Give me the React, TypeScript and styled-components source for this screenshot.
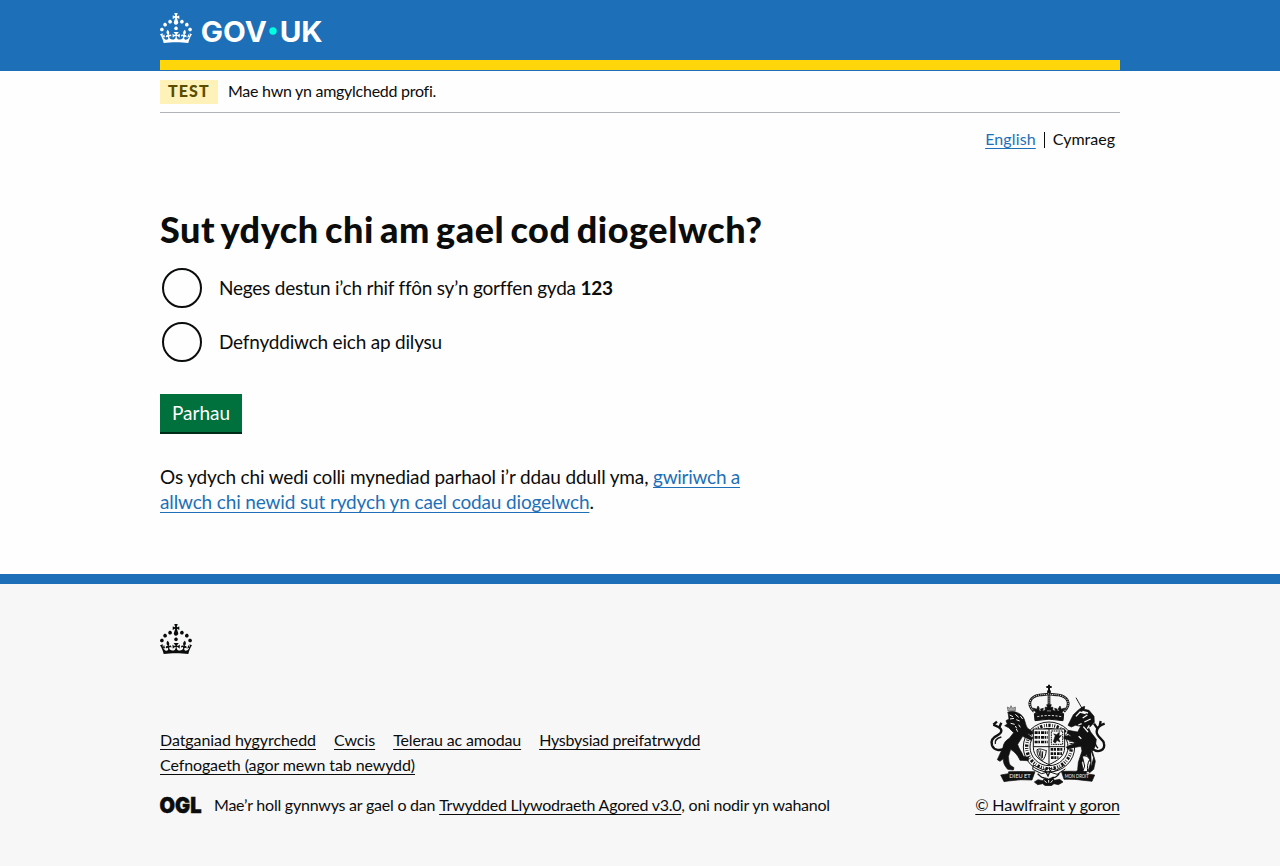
import React from "react";
import styled, { createGlobalStyle } from "styled-components";

const GlobalStyle = createGlobalStyle`
  * { box-sizing: border-box; }
  body {
    margin: 0;
    background: #fefefe;
    color: #0b0c0c;
    font-family: Lato, "Liberation Sans", sans-serif;
    font-size: 19px;
    line-height: 25px;
  }
`;

type Track = { $track?: number };

const Container = styled.div`
  width: 960px;
  margin: 0 auto;
`;

const Header = styled.header`
  height: 71px;
  background: #1d70b8;
`;

const HeaderInner = styled(Container)`
  height: 70px;
  padding-top: 13px;
  border-bottom: 10px solid #ffd60a;
`;

const HomeLink = styled.a`
  display: block;
  width: 162px;
  height: 30px;
  color: #fff;
`;

const LogoSvg = styled.svg`
  display: block;
  overflow: visible;
`;

const Label = styled.span<Track>`
  letter-spacing: ${(p) => p.$track ?? 0}px;
  white-space: nowrap;
`;

const PhaseBanner = styled.div`
  display: flex;
  align-items: center;
  height: 42px;
  border-bottom: 1px solid #b1b4b6;
  font-size: 16px;
  line-height: 20px;

  ${Label} {
    padding-bottom: 2px;
  }
`;

const Tag = styled.strong`
  width: 58px;
  height: 24px;
  margin-right: 10px;
  padding-left: 8px;
  background: #fff2b8;
  color: #594d00;
  font-size: 16px;
  font-weight: 900;
  line-height: 22px;
  letter-spacing: 1.1px;
`;

const Link = styled.a<Track & { $dark?: boolean }>`
  color: ${(p) => (p.$dark ? "#0b0c0c" : "#1d70b8")};
  letter-spacing: ${(p) => p.$track ?? 0}px;
  text-decoration: underline;
  text-decoration-thickness: 1px;
  text-underline-offset: 3px;
  text-decoration-skip-ink: none;
  white-space: nowrap;
`;

const LanguageNav = styled.nav`
  display: flex;
  justify-content: flex-end;
  align-items: center;
  height: 25px;
  margin-top: 13px;
  padding-right: 5px;
  font-size: 16px;
`;

const Divider = styled.span`
  width: 1px;
  height: 16px;
  margin: 2px 8px 0;
  background: #0b0c0c;
`;

const Main = styled.main`
  width: 630px;
  padding-top: 58px;
`;

const Heading = styled.h1`
  margin: 0 0 17px;
  font-size: 36px;
  line-height: 40px;
  font-weight: 900;
  letter-spacing: 0.57px;
  word-spacing: -3px;
  white-space: nowrap;
`;

const Radio = styled.label`
  display: flex;
  align-items: center;
  height: 44px;
  margin-bottom: 10px;
  padding-left: 2px;

  ${Label} {
    padding-bottom: 2px;
  }
`;

const RadioCircle = styled.span`
  width: 40px;
  height: 40px;
  margin-right: 17px;
  border: 2px solid #0b0c0c;
  border-radius: 50%;
`;

const Button = styled.button`
  display: block;
  width: 82px;
  height: 38px;
  margin: 30px 0 32px;
  padding: 0 0 2px;
  border: 0;
  background: #00703c;
  box-shadow: 0 2px 0 #002d18;
  color: #fff;
  font: inherit;
`;

const Paragraph = styled.p`
  margin: 0;
`;

const Footer = styled.footer`
  height: 292px;
  margin-top: 60px;
  padding-top: 40px;
  border-top: 10px solid #1d70b8;
  background: #f7f7f7;
  font-size: 16px;
`;

const FooterCrown = styled.div`
  height: 60px;
`;

const FooterRow = styled.div`
  display: flex;
  justify-content: space-between;
`;

const FooterLinks = styled.div`
  display: flex;
  flex-wrap: wrap;
  column-gap: 18px;
  width: 700px;
  padding-top: 43px;
`;

const Licence = styled.div`
  display: flex;
  align-items: center;
  margin-top: 15px;
`;

const OglMark = styled.svg`
  display: block;
  overflow: visible;
  margin-right: 13px;
`;

const Copyright = styled.div`
  display: flex;
  flex-direction: column;
  align-items: center;
  width: 145px;
`;

const CrestSvg = styled.svg`
  display: block;
  margin-bottom: 6px;
`;

const CROWN =
  "M22.6 10.4c-1 .4-2-.1-2.4-1-.4-.9.1-2 1-2.4.9-.4 2 .1 2.4 1s-.1 2-1 2.4m-5.9 6.7c-.9.4-2-.1-2.4-1-.4-.9.1-2 1-2.4.9-.4 2 .1 2.4 1s-.1 2-1 2.4m10.8-3.7c-1 .4-2-.1-2.4-1-.4-.9.1-2 1-2.4.9-.4 2 .1 2.4 1s0 2-1 2.4m3.3 4.8c-1 .4-2-.1-2.4-1-.4-.9.1-2 1-2.4.9-.4 2 .1 2.4 1s-.1 2-1 2.4M17 4.7l2.3 1.2V2.5l-2.3.7-.2-.2.9-3h-3.4l.9 3-.2.2c-.1.1-2.3-.7-2.3-.7v3.4L15 4.7c.1.1.1.2.2.2l-1.3 4c-.1.2-.1.4-.1.6 0 1.1.8 2 1.9 2.2h.7c1-.2 1.9-1.1 1.9-2.1 0-.2 0-.4-.1-.6l-1.3-4c-.1-.2 0-.2.1-.3m-7.6 5.7c.9.4 2-.1 2.4-1 .4-.9-.1-2-1-2.4-.9-.4-2 .1-2.4 1s0 2 1 2.4m-5 3c.9.4 2-.1 2.4-1 .4-.9-.1-2-1-2.4-.9-.4-2 .1-2.4 1s.1 2 1 2.4m-3.2 4.8c.9.4 2-.1 2.4-1 .4-.9-.1-2-1-2.4-.9-.4-2 .1-2.4 1s0 2 1 2.4m14.8 11c4.4 0 8.6.3 12.3.8 1.1-4.5 2.4-7 3.7-8.8l-2.5-.9c.2 1.3.3 1.9 0 2.7-.4-.4-.8-1.1-1.1-2.3l-1.2 4c.7-.5 1.3-.8 2-.9-1.1 2.5-2.6 3.1-3.5 3-1.1-.2-1.7-1.2-1.5-2.1.3-1.2 1.5-1.5 2.1-.1 1.1-2.3-.8-3-2-2.3 1.9-1.9 2.1-3.5.6-5.6-2.1 1.6-2.1 3.2-1.2 5.5-1.2-1.4-3.2-.6-2.5 1.6.9-1.4 2.1-.5 1.9.8-.2 1.1-1.7 2.1-3.5 1.9-2.7-.2-2.9-2.1-2.9-3.6.7-.1 1.9.5 2.9 1.9l.4-4.3c-1.1 1.1-2.1 1.4-3.2 1.4.4-1.2 2.1-3 2.1-3h-5.4s1.7 1.9 2.1 3c-1.1 0-2.1-.2-3.2-1.4l.4 4.3c1-1.4 2.2-2 2.9-1.9-.1 1.5-.2 3.4-2.9 3.6-1.9.2-3.4-.8-3.5-1.9-.2-1.3 1-2.2 1.9-.8.7-2.3-1.2-3-2.5-1.6.9-2.2.9-3.9-1.2-5.5-1.5 2-1.3 3.7.6 5.6-1.2-.7-3.1 0-2 2.3.6-1.4 1.8-1.1 2.1.1.2.9-.3 1.9-1.5 2.1-.9.2-2.4-.5-3.5-3 .6 0 1.2.3 2 .9l-1.2-4c-.3 1.1-.7 1.9-1.1 2.3-.3-.8-.2-1.4 0-2.7l-2.9.9C1.3 23 2.6 25.5 3.7 30c3.7-.5 7.9-.8 12.3-.8";

const Logo = () => (
  <LogoSvg width="164" height="30" viewBox="0 0 164 30" fill="currentColor" role="img" aria-label="GOV.UK">
    <path fillRule="evenodd" d={CROWN} />
    <g fontFamily="Inter, sans-serif" fontWeight="700" fontSize="29">
      <text x="40.8" y="28.5" textLength="66" lengthAdjust="spacingAndGlyphs">GOV</text>
      <text x="119.7" y="28.5" textLength="43" lengthAdjust="spacingAndGlyphs">UK</text>
    </g>
    <circle cx="113" cy="18" r="3.7" fill="#00ffe0" />
  </LogoSvg>
);

const Crest = () => (
  <CrestSvg width="125" height="102" viewBox="45 27 375 306" fill="none" stroke="#111" aria-hidden="true">
    {/* royal crown */}
    <g>
      <path d="M237 29v22M229 36h16" strokeWidth="6" />
      <circle cx="237" cy="50" r="6" fill="#111" stroke="none" />
      <path d="M192 110C166 84 184 64 208 60c14-2 22 0 29-4 7 4 15 2 29 4 24 4 42 24 16 50" strokeWidth="8" />
      <path d="M192 110C166 84 184 64 208 60c14-2 22 0 29-4 7 4 15 2 29 4 24 4 42 24 16 50" stroke="#f7f7f7" strokeWidth="3" strokeDasharray="3 3" />
      <path d="M237 60v40" strokeWidth="8" />
      <path d="M237 62v32" stroke="#f7f7f7" strokeWidth="3" strokeDasharray="3 3" />
      <path d="M198 114l-8-15 10 4 4-10 6 10 10-3-2 9 8-4-1-8h8l-3-8h14l-3 8h8l-1 8 8 4-2-9 10 3 6-10 4 10 10-4-8 15z" fill="#111" strokeWidth="2" />
      <path d="M208 100l3 8M262 100l3 8M231 108h12" stroke="#f7f7f7" strokeWidth="2" />
      <path d="M193 116q44-10 88 0l-2 21q-42-9-84 0z" fill="#111" strokeWidth="3" />
      <path d="M202 125q35-7 72 0" stroke="#f7f7f7" strokeWidth="3" strokeDasharray="6 5" />
    </g>
    {/* garter and quartered shield */}
    <g>
      <ellipse cx="237" cy="216" rx="77" ry="75" strokeWidth="3" fill="#f7f7f7" />
      <ellipse cx="237" cy="216" rx="67" ry="65" strokeWidth="10" strokeDasharray="3 4 7 5 2 4" />
      <ellipse cx="237" cy="216" rx="57" ry="56" strokeWidth="3" fill="#f7f7f7" />
      <path d="M190 162h94v55c0 28-22 40-47 52-25-12-47-24-47-52z" strokeWidth="3" fill="#f7f7f7" />
      <path d="M194 173h40M194 187h40M194 201h40" strokeWidth="8" strokeDasharray="9 2 5 3" />
      <path d="M242 223h38M242 236h34M243 248h22" strokeWidth="8" strokeDasharray="8 2 6 3" />
      <path d="M237 162v106M190 215h94" strokeWidth="3" />
      <path d="M244 168h34v40h-34z" strokeWidth="3" strokeDasharray="5 2" />
      <path d="M250 200l6-18-5-5 9 2 8-7-1 12 7-3-8 10 4 10-9-5-5 8z" fill="#111" strokeWidth="2" />
      <path d="M201 224c12-6 24 4 28 2-2 15-4 23-13 31-8-8-16-17-15-33M206 226l4 18M212 226l2 25M218 229l-1 20" strokeWidth="3" />
      <path d="M190 270l28 14 19-5 21 7 27-16M190 270l-2 13 27 13 22-6 24 8 25-16" strokeWidth="3" />
      <path d="M225 285l9 18 8-19" strokeWidth="4" />
    </g>
    {/* lion */}
    <g>
      <path d="M114 108l-2-12 8 4 3-8 5 8 8-4 0 11zM111 112h26" strokeWidth="2" stroke="#555" fill="#aaa" />
      <path d="M114 112c12-6 33 0 43 11 9 11 8 24 15 36l17 12-5 8-14-4 17 13-3 8-26-12-15 24c4 16 14 24 17 36l16 3-1 10-25-1c-6-16-17-25-28-33l-7 22c2 8 0 18 6 26l11 7-2 7-17-2c-11-13-14-22-13-32l-10 8-8-5 17-37c2-14 9-21 19-27l13-17-15-15-12-6 8-5-4-10 9-5z" fill="#111" strokeWidth="2" />
      <path d="M119 120l10 5M136 118l10 9M120 132l12-2M139 134l10 4M122 145l12 3M146 149l5 8M139 162l4 8M151 123l7 9M136 153l4 7" stroke="#f7f7f7" strokeWidth="3" />
      <path d="M108 218c-18 12-36 8-42-7-5-15 5-25 16-30 14-7 17-18 3-25l-15-7 M70 149l11-9M88 157l6-14" strokeWidth="7" />
      <path d="M76 207c-3-12 7-18 18-21" strokeWidth="4" />
    </g>
    {/* unicorn */}
    <g>
      <path d="M318 68l18 32" strokeWidth="3" />
      <path d="M318 68l18 32" stroke="#f7f7f7" strokeWidth="1" strokeDasharray="2 4" />
      <path d="M310 119l16-15 10-7 8-3-1 9 14 3 15 18 1 18-13 14-6-2 8 17 17 22-3 20-9 16 9 30-5 24-12 10-5-4 8-26-13-25-14 25 6 28-11 5-12-3 5-9 2-22 11-34-3-14-24 4-15 5-5-7 28-13-36-13 3-8 21 2-14-11 4-7 28 5 9-17-16-3-12 5-10-5z" fill="#111" strokeWidth="2" />
      <path d="M318 124l12-13 17 5M338 129l14-9M343 141l19-9M337 109l17 5M325 150l10-4M340 155l14 16M358 151l-6 10M326 184l8 7" stroke="#f7f7f7" strokeWidth="4" />
      <path d="M337 244c10-4 19 2 22 10-6 8-8 24-6 36l-15 1 6-18zM363 226l8 22-6 27" fill="#f7f7f7" strokeWidth="3" />
      <path d="M366 221c19 15 40 4 36-15-2-16-23-19-22-36 1-13 11-20 24-24M382 160l-10-14M389 154l3-16" strokeWidth="7" />
      <path d="M384 220c-7-6-7-15-13-23" strokeWidth="4" />
    </g>
    {/* motto scroll */}
    <g>
      <path d="M92 300l23-4 1-6q41-1 79 0l-9 25q-32-3-71 3l-13 2zM374 300l-25-4v-6q-37-2-75-1l8 24q31-2 67 4l17 2z" fill="#111" strokeWidth="2" />
      <g fill="#f7f7f7" stroke="none" fontFamily="Lato, sans-serif" fontWeight="400" fontSize="17">
        <text x="118" y="309" textLength="64" lengthAdjust="spacingAndGlyphs">DIEU ET</text>
        <text x="284" y="308" textLength="72" lengthAdjust="spacingAndGlyphs">MON DROIT</text>
      </g>
      <path d="M203 296c8 8 14 14 20 12M268 295c-7 10-15 14-21 12" strokeWidth="4" />
      <path d="M193 321l11-7 15 3 5-9 12 4 12-5 5 9 16-3 10 8-14 8-13-3-8 6h-18l-8-6-15 3z" fill="#111" strokeWidth="2" />
      <path d="M223 317l7 6M236 315v8M248 316l-6 7" stroke="#f7f7f7" strokeWidth="3" />
    </g>
  </CrestSvg>
);

export default function App() {
  return (
    <>
      <GlobalStyle />
      <Header>
        <HeaderInner>
          <HomeLink><Logo /></HomeLink>
        </HeaderInner>
      </Header>
      <Container>
        <PhaseBanner>
          <Tag>TEST</Tag>
          <Label $track={-0.27}>Mae hwn yn amgylchedd profi.</Label>
        </PhaseBanner>
        <LanguageNav>
          <Link $track={0.12}>English</Link>
          <Divider />
          <Label>Cymraeg</Label>
        </LanguageNav>
        <Main>
          <Heading>Sut ydych chi am gael cod diogelwch?</Heading>
          <Radio>
            <RadioCircle />
            <Label $track={-0.22}>Neges destun i’ch rhif ffôn sy’n gorffen gyda <b>123</b></Label>
          </Radio>
          <Radio>
            <RadioCircle />
            <Label $track={-0.2}>Defnyddiwch eich ap dilysu</Label>
          </Radio>
          <Button>Parhau</Button>
          <Paragraph>
            <Label $track={-0.15}>Os ydych chi wedi colli mynediad parhaol i’r ddau ddull yma, </Label>
            <Link $track={-0.26}>gwiriwch a</Link>
            <br />
            <Link $track={-0.14}>allwch chi newid sut rydych yn cael codau diogelwch</Link>.
          </Paragraph>
        </Main>
      </Container>
      <Footer>
        <Container>
          <FooterCrown>
            <svg width="32" height="30" viewBox="0 0 32 30" fill="#0b0c0c">
              <path fillRule="evenodd" d={CROWN} />
            </svg>
          </FooterCrown>
          <FooterRow>
            <div>
              <FooterLinks>
                <Link $dark $track={-0.07}>Datganiad hygyrchedd</Link>
                <Link $dark $track={-0.05}>Cwcis</Link>
                <Link $dark $track={-0.15}>Telerau ac amodau</Link>
                <Link $dark $track={-0.22}>Hysbysiad preifatrwydd</Link>
                <Link $dark $track={-0.11}>Cefnogaeth (agor mewn tab newydd)</Link>
              </FooterLinks>
              <Licence>
                <OglMark width="41" height="17" viewBox="0 0 41 17" fill="#0b0c0c">
                  <text x="-0.5" y="16.8" fontFamily="Inter, sans-serif" fontWeight="900" fontSize="22" stroke="#0b0c0c" strokeWidth="0.5" textLength="42" lengthAdjust="spacingAndGlyphs">OGL</text>
                </OglMark>
                <Label $track={-0.23}>
                  Mae’r holl gynnwys ar gael o dan{" "}
                  <Link $dark $track={-0.24}>Trwydded Llywodraeth Agored v3.0</Link>, oni nodir yn wahanol
                </Label>
              </Licence>
            </div>
            <Copyright>
              <Crest />
              <Link $dark $track={-0.165}>© Hawlfraint y goron</Link>
            </Copyright>
          </FooterRow>
        </Container>
      </Footer>
    </>
  );
}
